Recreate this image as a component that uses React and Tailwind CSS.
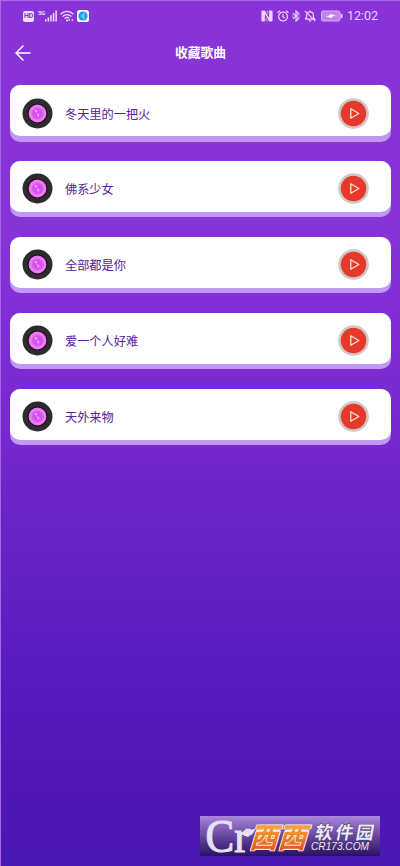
import React from 'react';

const songs = ['冬天里的一把火', '佛系少女', '全部都是你', '爱一个人好难', '天外来物'];

// Left side of the status bar: HD, 5G signal, wifi, app badge
const StatusLeft = () => (
  <div className="flex items-center h-[14px] text-[#f3dcff]">
    <span className="w-[11px] h-[11px] rounded-[2px] bg-[#f3dcff] text-[#8632d6] text-[7px] leading-[11px] font-bold text-center tracking-[-0.3px]">HD</span>
    <span className="ml-[4px] -mt-[7px] w-[7px] text-[6px] leading-[6px] font-bold tracking-[-0.5px]">5G</span>
    <svg className="w-[12px] h-[12px]" viewBox="0 0 12 12" fill="currentColor">
      <rect x="0" y="9.2" width="1.5" height="2.3" />
      <rect x="2.6" y="7.4" width="1.5" height="4.1" />
      <rect x="5.2" y="5.2" width="1.5" height="6.3" />
      <rect x="7.8" y="3" width="1.5" height="8.5" />
      <rect x="10.4" y="0.5" width="1.5" height="11" />
    </svg>
    <svg className="ml-[3px] w-[14px] h-[12px]" viewBox="0 0 14 12" fill="none" stroke="currentColor" strokeWidth="1.3">
      <path d="M0.6 4.2C4.2 0.4 9.8 0.4 13.4 4.2" />
      <path d="M2.6 6.5C5.2 3.9 8.8 3.9 11.4 6.5" />
      <path d="M4.6 8.6C6 7.2 8 7.2 9.2 8.2" />
      <circle cx="7" cy="10.5" r="1" fill="currentColor" stroke="none" />
      <path d="M9.3 11V9L8.6 9.8M12.2 8.8V11L12.9 10.2" strokeWidth="0.9" />
    </svg>
    <svg className="ml-[3px] w-[12px] h-[12px]" viewBox="0 0 12 12">
      <rect width="12" height="12" rx="2.6" fill="#effaff" />
      <circle cx="6" cy="6" r="4.6" fill="#209be5" />
      <path d="M8 3L3.9 6L8 9M6.8 4V8" fill="none" stroke="#a9e2ff" strokeWidth="0.8" />
    </svg>
  </div>
);

// Right side of the status bar: nfc, alarm, bluetooth, muted bell, battery, clock
const StatusRight = () => (
  <div className="flex items-center h-[14px] text-[#efd2ff]">
    <svg className="w-[12px] h-[12px]" viewBox="0 0 12 12">
      <path d="M1.8 0.4H3.8L8.1 8V0.4H10.2Q11.6 0.4 11.6 1.8V10.2Q11.6 11.6 10.2 11.6H8.2L3.9 4V11.6H1.8Q0.4 11.6 0.4 10.2V1.8Q0.4 0.4 1.8 0.4Z" fill="currentColor" />
      <path d="M5.3 1.2L6.8 1.2V4M6.8 10.8H5.2V8" fill="none" stroke="currentColor" strokeWidth="0.7" />
    </svg>
    <svg className="ml-[4px] w-[12px] h-[12px]" viewBox="0 0 12 12" fill="none" stroke="currentColor" strokeWidth="1.2">
      <circle cx="6" cy="6.6" r="4.4" />
      <path d="M6 4V6.9L7.9 8M0.6 2.8L3 0.8M11.4 2.8L9 0.8" />
    </svg>
    <svg className="ml-[3px] w-[8px] h-[12px]" viewBox="0 0 8 12" fill="none" stroke="currentColor" strokeWidth="1.2">
      <path d="M0.8 3.3L6.8 8.4L4 11V1L6.8 3.6L0.8 8.7" />
      <path d="M0 6H1.3M6.7 6H8" />
    </svg>
    <svg className="ml-[4px] w-[12px] h-[12px]" viewBox="0 0 12 12" fill="none" stroke="currentColor" strokeWidth="1.2">
      <path d="M1.2 9.2H10.8L9.4 7.4V5C9.4 0.8 2.6 0.8 2.6 5V7.4L1.2 9.2" />
      <path d="M6 0.4V1.8M4.8 10.9H7.2M0.8 0.8L11.2 11.2" />
    </svg>
    <svg className="ml-[5px] w-[22px] h-[12px]" viewBox="0 0 22 12">
      <rect x="0.5" y="1" width="18.6" height="10" rx="1.8" fill="#bd82ef" stroke="#d9aff8" />
      <rect x="20" y="4" width="1.5" height="4" rx="0.6" fill="currentColor" />
      <path d="M4.8 6.3L9 5.2V3.8L14.8 5.7L10.8 6.8V8.2Z" fill="#ffffff" />
    </svg>
    <span className="ml-[4px] w-[32px] text-[12.5px] leading-[14px] whitespace-nowrap font-['Roboto',sans-serif]">12:02</span>
  </div>
);

const Disc = () => (
  <svg className="w-[31px] h-[31px]" viewBox="0 0 31 31">
    <defs>
      <radialGradient id="disc" cx="50%" cy="50%" r="50%">
        <stop offset="0" stopColor="#cf4fe8" />
        <stop offset="0.55" stopColor="#d557ec" />
        <stop offset="0.75" stopColor="#f17df5" />
        <stop offset="1" stopColor="#ee74f0" />
      </radialGradient>
    </defs>
    <circle cx="15.5" cy="15.5" r="15" fill="#2d2b2e" />
    <circle cx="15.5" cy="15.5" r="10" fill="#180b1c" />
    <circle cx="15.5" cy="15.5" r="8.9" fill="url(#disc)" />
    <path d="M13.6 12.6L14.1 13.6M16.6 16.8L16.1 17.8" fill="none" stroke="#ffcafa" strokeWidth="1.3" strokeLinecap="round" />
    <path d="M14.8 15.1L15.6 15.5" fill="none" stroke="#f6a6f7" strokeWidth="1" strokeLinecap="round" />
  </svg>
);

const PlayButton = () => (
  <button className="w-[31px] h-[31px]">
    <svg className="w-[31px] h-[31px]" viewBox="0 0 31 31">
      <circle cx="15.5" cy="15.5" r="15.3" fill="#cfc6c5" />
      <circle cx="15.5" cy="15.5" r="12.7" fill="#e53a2b" />
      <path d="M12.8 10.8V20.2L20.8 15.5Z" fill="none" stroke="#ffe3dc" strokeWidth="1.3" strokeLinejoin="round" />
    </svg>
  </button>
);

const SongCard = ({ title }) => (
  <div className="h-[56.5px] rounded-[10px] bg-[#c097f3] pb-[5.5px]">
    <div className="flex items-center h-[51px] rounded-[10px] bg-white pl-[12px] pr-[22px] pt-[5px]">
      <Disc />
      <span className="ml-[12px] mt-[3px] flex-1 text-[12.2px] leading-[18px] text-[#58209a]">{title}</span>
      <PlayButton />
    </div>
  </div>
);

// Site mark laid over the bottom of the screen
const Watermark = () => (
  <div className="absolute left-[199px] top-[815px] w-[180px] h-[40px] bg-linear-to-b from-[#aa86dc] via-[#68479f] to-[#2b1063]">
    <svg className="w-[180px] h-[40px] overflow-visible" viewBox="0 0 180 40">
      <defs>
        <linearGradient id="orange" x1="0" y1="0" x2="0" y2="1">
          <stop offset="0.2" stopColor="#f6b136" />
          <stop offset="0.9" stopColor="#e4501f" />
        </linearGradient>
      </defs>
      <g fill="#e6e0f2">
        <text x="5.5" y="35.5" fontSize="46" textLength="43" lengthAdjust="spacingAndGlyphs" stroke="#e6e0f2" strokeWidth="1.1" fontFamily="Liberation Serif, serif">Cr</text>
        <path d="M43 19C43.5 13 47 11.5 50 13C52 14 53.5 13.5 55 12.5C54.5 18 48 22.5 43 19Z" />
      </g>
      <g transform="skewX(-17)" fill="url(#orange)" stroke="#fff4e6" strokeWidth="1.8" strokeLinejoin="round" paintOrder="stroke" fontWeight="700" fontFamily="Noto Sans CJK SC, sans-serif">
        <rect x="61.5" y="15" width="22.5" height="18" stroke="#fff4e6" />
        <rect x="90" y="15" width="22.5" height="18" stroke="#fff4e6" />
        <text x="58.5" y="31.5" fontSize="28.5">西</text>
        <text x="87" y="31.5" fontSize="28.5">西</text>
      </g>
      <g fill="#eee9f7" stroke="#463064" strokeWidth="0.8" paintOrder="stroke">
        <g transform="skewX(-10)">
          <text x="118" y="23" fontSize="18" textLength="59" fontWeight="700" fontFamily="Noto Sans CJK SC, sans-serif">软件园</text>
        </g>
        <text x="111" y="33.8" fontSize="10.5" fontStyle="italic" textLength="58" lengthAdjust="spacingAndGlyphs" fontFamily="Liberation Sans, sans-serif">CR173.COM</text>
      </g>
    </svg>
  </div>
);

export default function App() {
  return (
    <div className="relative w-[400px] h-[866px] overflow-hidden border-t border-l border-[#a765e8] bg-[linear-gradient(#8733d8_25%,#7828d0_50%,#6822c6_62%,#571abd_80%,#4f17b5_91%,#4a18b4)] font-['Roboto','Noto_Sans_CJK_SC',sans-serif]">
      <div className="flex justify-between pt-[8px] pl-[22px] pr-[21px]">
        <StatusLeft />
        <StatusRight />
      </div>

      <header className="grid grid-cols-[40px_1fr_40px] items-center mt-[16px] h-[28px]">
        <svg className="ml-[14px] w-[16px] h-[16px]" viewBox="0 0 16 16" fill="none" stroke="#ffffff" strokeWidth="1.5" strokeLinecap="round" strokeLinejoin="round">
          <path d="M15 8H1M8 1L1 8L8 15" />
        </svg>
        <h1 className="text-center text-[12.8px] leading-[18px] font-bold text-white">收藏歌曲</h1>
      </header>

      <main className="flex flex-col gap-[19.4px] mt-[18px] pl-[9px] pr-[9px]">
        {songs.map((title) => (
          <SongCard key={title} title={title} />
        ))}
      </main>

      <Watermark />
    </div>
  );
}
